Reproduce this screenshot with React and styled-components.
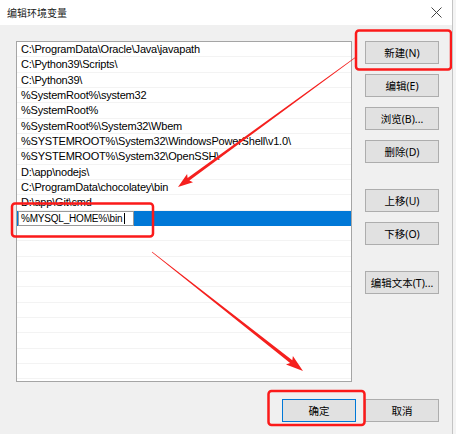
import React from "react";
import styled, { createGlobalStyle, css } from "styled-components";

const GlobalStyle = createGlobalStyle`
  html, body {
    margin: 0;
    padding: 0;
    background: #f4f4f4;
  }
  * { box-sizing: border-box; }
`;

const paths = [
  "C:\\ProgramData\\Oracle\\Java\\javapath",
  "C:\\Python39\\Scripts\\",
  "C:\\Python39\\",
  "%SystemRoot%\\system32",
  "%SystemRoot%",
  "%SystemRoot%\\System32\\Wbem",
  "%SYSTEMROOT%\\System32\\WindowsPowerShell\\v1.0\\",
  "%SYSTEMROOT%\\System32\\OpenSSH\\",
  "D:\\app\\nodejs\\",
  "C:\\ProgramData\\chocolatey\\bin",
  "D:\\app\\Git\\cmd",
];

// tapered annotation arrow, like the screenshot tool draws
function arrowPoints(x1, y1, x2, y2, shaftW, headW, headL) {
  const dx = x2 - x1;
  const dy = y2 - y1;
  const len = Math.hypot(dx, dy);
  const ux = dx / len, uy = dy / len;
  const nx = -uy, ny = ux;
  const bx = x2 - ux * headL, by = y2 - uy * headL;
  const wx = x2 - ux * headL * 1.15, wy = y2 - uy * headL * 1.15;
  const p = (x, y) => `${x.toFixed(1)},${y.toFixed(1)}`;
  return [
    p(x1 + nx * 0.3, y1 + ny * 0.3),
    p(bx + nx * shaftW / 2, by + ny * shaftW / 2),
    p(wx + nx * headW / 2, wy + ny * headW / 2),
    p(x2, y2),
    p(wx - nx * headW / 2, wy - ny * headW / 2),
    p(bx - nx * shaftW / 2, by - ny * shaftW / 2),
    p(x1 - nx * 0.3, y1 - ny * 0.3),
  ].join(" ");
}

export default function App() {
  const emptyRows = Array.from({ length: 12 });

  return (
    <>
      <GlobalStyle />
      <Window>
        <TitleBar>
          <Title>编辑环境变量</Title>
          <svg width="11" height="11" viewBox="0 0 11 11">
            <path d="M0.5 0.5 L10.5 10.5 M10.5 0.5 L0.5 10.5" stroke="#444" strokeWidth="1" />
          </svg>
        </TitleBar>

        <Body>
          <Main>
            <ListBox>
              {paths.map((p) => (
                <Row key={p}>{p}</Row>
              ))}
              <Row $selected>
                <EditBox>
                  %MYSQL_HOME%\bin<Caret />
                </EditBox>
              </Row>
              {emptyRows.map((_, i) => (
                <Row key={"e" + i} />
              ))}
            </ListBox>

            <ButtonCol>
              <Btn>新建(N)</Btn>
              <Btn $gap={10}>编辑(E)</Btn>
              <Btn $gap={10}>浏览(B)...</Btn>
              <Btn $gap={10}>删除(D)</Btn>
              <Btn $gap={26}>上移(U)</Btn>
              <Btn $gap={10}>下移(O)</Btn>
              <Btn $gap={26}>编辑文本(T)...</Btn>
            </ButtonCol>
          </Main>

          <Footer>
            <Btn $primary>确定</Btn>
            <Btn>取消</Btn>
          </Footer>
        </Body>

        <Marks width="456" height="434" viewBox="0 0 456 434">
          <rect x="356" y="30.5" width="95" height="39" rx="3" />
          <rect x="12" y="203.5" width="141" height="33" rx="3" />
          <rect x="268.5" y="391" width="96" height="34" rx="3" />
          <polygon points={arrowPoints(356, 57, 178, 187, 3, 10, 13)} />
          <polygon points={arrowPoints(152, 252, 303, 371, 3.5, 11, 15)} />
        </Marks>
      </Window>
    </>
  );
}

const Window = styled.div`
  position: relative;
  width: 453px;
  height: 434px;
  background: #f0f0f0;
  border-right: 1px solid #c4c4c4;
  display: flex;
  flex-direction: column;
  font-family: "Noto Sans", "Noto Sans CJK SC", sans-serif;
  color: #000;
  overflow: hidden;
`;

const TitleBar = styled.div`
  height: 25px;
  background: #fff;
  display: flex;
  align-items: center;
  justify-content: space-between;
  padding: 0 10px 0 7px;
`;

const Title = styled.span`
  font-family: "Noto Sans CJK SC", sans-serif;
  font-size: 10px;
  color: #1a1a1a;
`;

const Body = styled.div`
  flex: 1;
  display: flex;
  flex-direction: column;
  padding: 16px 13px 0 16px;
`;

const Main = styled.div`
  display: flex;
  gap: 13px;
`;

const ListBox = styled.div`
  width: 336px;
  height: 341px;
  background: #fff;
  border: 1px solid #a5a5a5;
  overflow: hidden;
`;

const Row = styled.div`
  height: 15.33px;
  padding-left: 4px;
  display: flex;
  align-items: center;
  font-family: "Liberation Sans", Arial, sans-serif;
  font-size: 11px;
  letter-spacing: -0.2px;
  white-space: nowrap;
  border-bottom: 1px solid #f3f3f3;

  ${(p) => p.$selected && css`
    background: #0078d7;
    padding-left: 1px;
    border-bottom: none;
  `}
`;

const EditBox = styled.div`
  width: 116px;
  height: 15px;
  background: #fff;
  border: 1px solid #9a9a9a;
  padding-left: 2px;
  display: flex;
  align-items: center;
  font-family: "Liberation Sans", Arial, sans-serif;
  font-size: 10px;
  letter-spacing: -0.2px;
  white-space: nowrap;
  overflow: hidden;
`;

const Caret = styled.span`
  display: inline-block;
  flex: none;
  width: 1px;
  height: 11px;
  background: #000;
  margin-left: 2px;
`;

const ButtonCol = styled.div`
  display: flex;
  flex-direction: column;
`;

const Btn = styled.button`
  width: 74px;
  height: 23px;
  margin: ${(p) => (p.$gap || 0)}px 0 0 0;
  padding: 0;
  background: #e1e1e1;
  border: 1px solid ${(p) => (p.$primary ? "#0078d7" : "#adadad")};
  font-family: "Noto Sans", "Noto Sans CJK SC", sans-serif;
  font-size: 10.5px;
  color: #000;
  display: flex;
  align-items: center;
  justify-content: center;
`;

const Footer = styled.div`
  display: flex;
  justify-content: flex-end;
  gap: 9px;
  margin-top: 17px;
`;

const Marks = styled.svg`
  position: absolute;
  left: 0;
  top: 0;
  pointer-events: none;

  rect {
    fill: none;
    stroke: #fb1a1a;
    stroke-width: 2.5;
  }
  polygon {
    fill: #f5201e;
  }
`;
